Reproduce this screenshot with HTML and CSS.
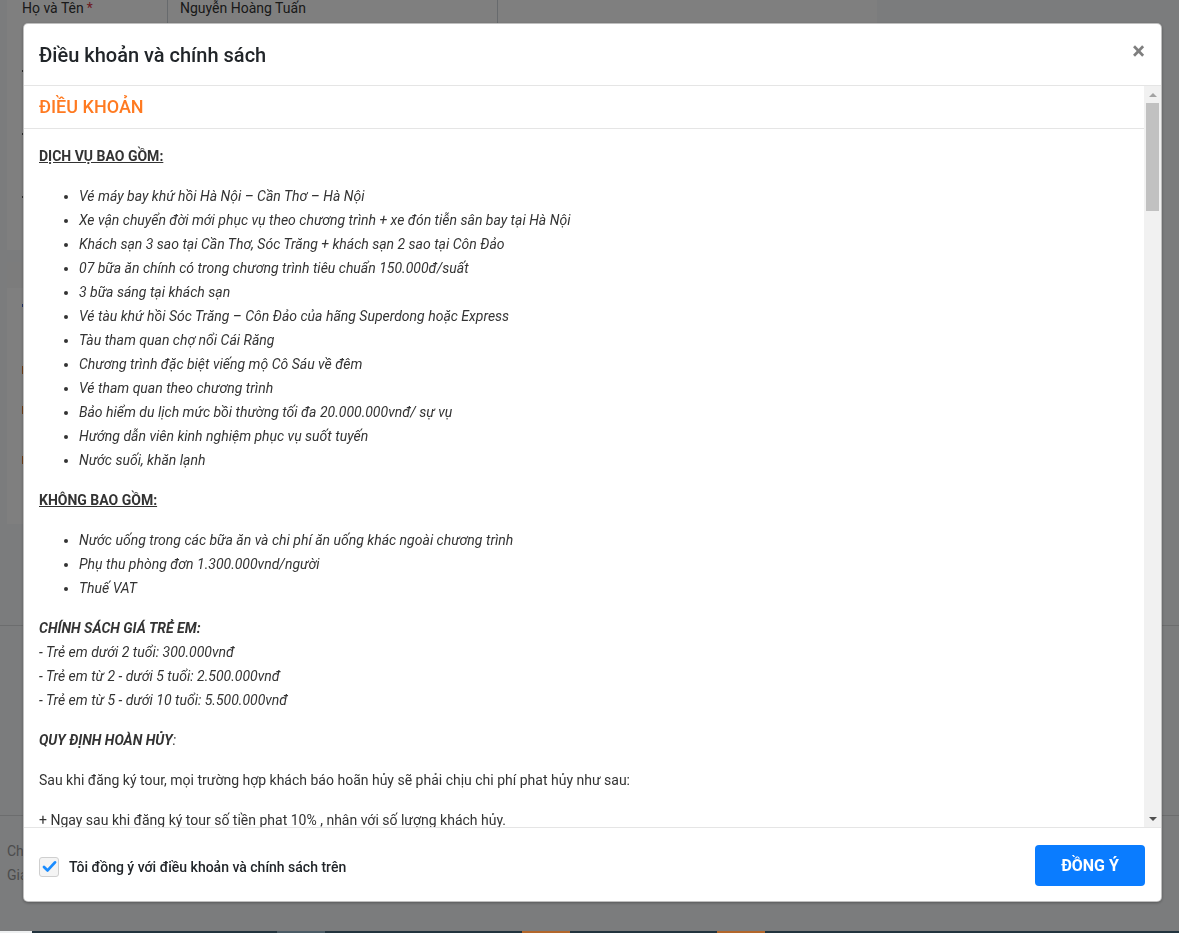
FILE: index.html
```html
<!DOCTYPE html>
<html lang="vi">
<head>
<meta charset="utf-8">
<title>Điều khoản và chính sách</title>
<link rel="stylesheet" href="styles.css">
</head>
<body>
<div class="page">
  <div class="page-top">
    <div class="card card-form">
      <div class="form-row">
        <div class="flabel">Họ và Tên <span class="req">*</span></div>
        <div class="finput">Nguyễn Hoàng Tuấn</div>
      </div>
      <div class="form-row"><div class="flabel"><span class="mark dark"></span></div><div class="finput"></div></div>
      <div class="form-row"><div class="flabel"><span class="mark dark"></span></div><div class="finput"></div></div>
      <div class="form-row"><div class="flabel"><span class="mark dark"></span></div><div class="finput"></div></div>
    </div>
    <div class="card card-info">
      <div class="info-head"></div>
      <div class="info-line first"><span class="mark blue"></span></div>
      <div class="info-line gap49"><span class="mark orange"></span></div>
      <div class="info-line gap24"><span class="mark orange"></span></div>
      <div class="info-line gap34"><span class="mark orange"></span></div>
    </div>
  </div>
  <div class="page-mid"></div>
  <div class="page-bottom">
    <div class="sum-line">Chương trình</div>
    <div class="sum-line">Giá tour</div>
  </div>
</div>

<div class="bottom-bar">
  <span class="seg seg-light"></span>
  <span class="seg seg-dark w245"></span>
  <span class="seg seg-slate"></span>
  <span class="seg seg-dark w197"></span>
  <span class="seg seg-orange"></span>
  <span class="seg seg-dark w147"></span>
  <span class="seg seg-orange"></span>
  <span class="seg seg-dark grow"></span>
</div>

<div class="backdrop"></div>

<div class="modal-wrap">
  <div class="modal">
    <div class="modal-header">
      <h5 class="modal-title">Điều khoản và chính sách</h5>
      <button class="close" type="button">×</button>
    </div>
    <div class="modal-body">
      <div class="scroll">
        <div class="terms-head">ĐIỀU KHOẢN</div>
        <div class="terms">
          <p class="sec"><strong><u>DỊCH VỤ BAO GỒM:</u></strong></p>
          <ul>
            <li><em>Vé máy bay khứ hồi Hà Nội – Cần Thơ – Hà Nội</em></li>
            <li><em>Xe vận chuyển đời mới phục vụ theo chương trình + xe đón tiễn sân bay tại Hà Nội</em></li>
            <li><em>Khách sạn 3 sao tại Cần Thơ, Sóc Trăng + khách sạn 2 sao tại Côn Đảo</em></li>
            <li><em>07 bữa ăn chính có trong chương trình tiêu chuẩn 150.000đ/suất</em></li>
            <li><em>3 bữa sáng tại khách sạn</em></li>
            <li><em>Vé tàu khứ hồi Sóc Trăng – Côn Đảo của hãng Superdong hoặc Express</em></li>
            <li><em>Tàu tham quan chợ nổi Cái Răng</em></li>
            <li><em>Chương trình đặc biệt viếng mộ Cô Sáu về đêm</em></li>
            <li><em>Vé tham quan theo chương trình</em></li>
            <li><em>Bảo hiểm du lịch mức bồi thường tối đa 20.000.000vnđ/ sự vụ</em></li>
            <li><em>Hướng dẫn viên kinh nghiệm phục vụ suốt tuyến</em></li>
            <li><em>Nước suối, khăn lạnh</em></li>
          </ul>
          <p class="sec"><strong><u>KHÔNG BAO GỒM:</u></strong></p>
          <ul>
            <li><em>Nước uống trong các bữa ăn và chi phí ăn uống khác ngoài chương trình</em></li>
            <li><em>Phụ thu phòng đơn 1.300.000vnd/người</em></li>
            <li><em>Thuế VAT</em></li>
          </ul>
          <p><em><strong>CHÍNH SÁCH GIÁ TRẺ EM:</strong><br>- Trẻ em dưới 2 tuổi: 300.000vnđ<br>- Trẻ em từ 2 - dưới 5 tuổi: 2.500.000vnđ<br>- Trẻ em từ 5 - dưới 10 tuổi: 5.500.000vnđ</em></p>
          <p><em><strong>QUY ĐỊNH HOÀN HỦY</strong>:</em></p>
          <p>Sau khi đăng ký tour, mọi trường hợp khách báo hoãn hủy sẽ phải chịu chi phí phat hủy như sau:</p>
          <p>+ Ngay sau khi đăng ký tour số tiền phat 10% , nhân với số lượng khách hủy.</p>
        </div>
      </div>
      <div class="scrollbar">
        <div class="sb-btn"><span class="arrow-up"></span></div>
        <div class="sb-track"><div class="sb-thumb"></div></div>
        <div class="sb-btn"><span class="arrow-down"></span></div>
      </div>
    </div>
    <div class="modal-footer">
      <label class="agree">
        <span class="checkbox">
          <svg width="15" height="13" viewBox="0 0 15 13"><path d="M2 7 L5.6 10.4 L13 2.4" fill="none" stroke="#1a8cff" stroke-width="2.8" stroke-linecap="round" stroke-linejoin="round"/></svg>
        </span>
        <span class="agree-text">Tôi đồng ý với điều khoản và chính sách trên</span>
      </label>
      <button class="btn-primary" type="button">ĐỒNG Ý</button>
    </div>
  </div>
</div>
</body>
</html>
```

FILE: styles.css
```css
* { box-sizing: border-box; }

html, body {
  margin: 0;
  padding: 0;
  height: 933px;
  overflow: hidden;
}

body {
  font-family: Roboto, "Noto Sans", "Liberation Sans", sans-serif;
  font-size: 14px;
  color: #333;
  background: #f6f8fa;
}

/* ---------- background page ---------- */
.page {
  display: flex;
  flex-direction: column;
  height: 933px;
}

.page-top {
  height: 625px;
  padding-left: 7px;
}

.card {
  width: 870px;
  background: #fff;
}

.card-form {
  height: 250px;
}

.form-row {
  display: flex;
  height: 63px;
}

.flabel {
  width: 160px;
  padding-left: 15px;
  line-height: 16px;
  height: 16px;
  color: #333;
  display: flex;
  align-items: center;
}

.req { color: #dc3545; margin-left: 3px; }

.mark {
  display: inline-block;
  width: 3px;
  height: 2px;
}
.mark.dark { background: #555; }
.mark.blue { background: #3a5ccc; height: 3px; }
.mark.orange { background: #e0792a; height: 8px; }

.finput {
  width: 331px;
  height: 28px;
  padding-left: 12px;
  line-height: 16px;
  border: 1px solid #ced4da;
  border-top: none;
  color: #333;
}

.card-info {
  margin-top: 12px;
  height: 262px;
  padding-left: 15px;
}

.info-head {
  height: 26px;
  margin-left: -15px;
  background: #f9f9f9;
}

.info-line {
  height: 16px;
  display: flex;
  align-items: center;
}

.info-line.first { margin-top: 9px; }
.info-line.gap49 { margin-top: 49px; }
.info-line.gap24 { margin-top: 24px; }
.info-line.gap34 { margin-top: 34px; }

.page-mid {
  height: 190px;
  border-top: 1px solid #d8dadc;
}

.page-bottom {
  flex: 1;
  border-top: 1px solid #d8dadc;
  padding: 23px 0 0 7px;
}

.sum-line {
  line-height: 24px;
  color: #999;
}

.bottom-bar {
  position: fixed;
  left: 0;
  right: 0;
  bottom: 0;
  height: 2px;
  display: flex;
  z-index: 3;
}

.seg { display: block; height: 2px; }
.seg-light { width: 32px; background: #eef0f1; }
.seg-dark { background: #22343e; }
.seg-slate { width: 48px; background: #4b5c66; }
.seg-orange { width: 48px; background: #b3672b; }
.w245 { width: 245px; }
.w197 { width: 197px; }
.w147 { width: 147px; }
.grow { flex: 1; }

/* ---------- backdrop + modal ---------- */
.backdrop {
  position: fixed;
  inset: 0;
  background: rgba(0, 0, 0, 0.5);
  z-index: 1;
}

.modal-wrap {
  position: fixed;
  inset: 0;
  z-index: 2;
  padding: 23px 0 0 23px;
}

.modal {
  width: 1139px;
  height: 879px;
  background: #fff;
  border: 1px solid rgba(0, 0, 0, 0.25);
  border-radius: 5px;
  box-shadow: 0 1px 3px rgba(0, 0, 0, 0.3);
  display: flex;
  flex-direction: column;
  overflow: hidden;
}

.modal-header {
  display: flex;
  align-items: center;
  height: 62px;
  padding: 16px 14px 15px 15px;
  border-bottom: 1px solid #e5e5e5;
}

.modal-title {
  margin: 0;
  font-size: 20px;
  font-weight: 500;
  line-height: 30px;
  color: #212529;
}

.close {
  margin-left: auto;
  margin-top: -8px;
  padding: 0 2px;
  border: none;
  background: none;
  font-family: Roboto, "Liberation Sans", sans-serif;
  font-size: 24px;
  font-weight: 700;
  line-height: 1;
  color: #000;
  opacity: 0.5;
}

.modal-body {
  flex: 1;
  display: flex;
  min-height: 0;
}

.scroll {
  flex: 1;
  overflow: hidden;
}

.terms-head {
  height: 43px;
  padding: 8px 15px;
  font-size: 18px;
  font-weight: 500;
  line-height: 26px;
  color: #ff7a21;
  border-bottom: 1px solid #e5e5e5;
}

.terms {
  padding: 15px 15px 0 15px;
  line-height: 24px;
  color: #333;
}

.terms p {
  margin: 0 0 16px 0;
}

.terms ul {
  margin: 0 0 16px 0;
  padding-left: 40px;
}

.terms strong { font-weight: 700; }

/* fake scrollbar */
.scrollbar {
  width: 17px;
  background: #f1f1f1;
  display: flex;
  flex-direction: column;
}

.sb-btn {
  height: 17px;
  display: flex;
  align-items: center;
  justify-content: center;
}

.arrow-up {
  width: 0;
  height: 0;
  border-left: 4px solid transparent;
  border-right: 4px solid transparent;
  border-bottom: 4px solid #a3a3a3;
}

.arrow-down {
  width: 0;
  height: 0;
  border-left: 4px solid transparent;
  border-right: 4px solid transparent;
  border-top: 4px solid #505050;
}

.sb-track {
  flex: 1;
  padding: 0 2px;
}

.sb-thumb {
  height: 108px;
  background: #c1c1c1;
}

/* footer */
.modal-footer {
  height: 74px;
  display: flex;
  align-items: center;
  justify-content: space-between;
  padding: 16px 16px 15px 15px;
  border-top: 1px solid #e5e5e5;
}

.agree {
  display: flex;
  align-items: center;
  margin-top: 3px;
}

.checkbox {
  width: 20px;
  height: 20px;
  border: 1px solid #cfcfcf;
  border-radius: 3px;
  background: #f4f4f4;
  display: flex;
  align-items: center;
  justify-content: center;
}

.agree-text {
  margin-left: 10px;
  font-size: 14px;
  font-weight: 500;
  color: #212529;
}

.btn-primary {
  width: 110px;
  height: 41px;
  border: none;
  border-radius: 4px;
  background: #0a7cff;
  color: #fff;
  font-family: Roboto, "Liberation Sans", sans-serif;
  font-size: 16px;
  font-weight: 700;
}
```
